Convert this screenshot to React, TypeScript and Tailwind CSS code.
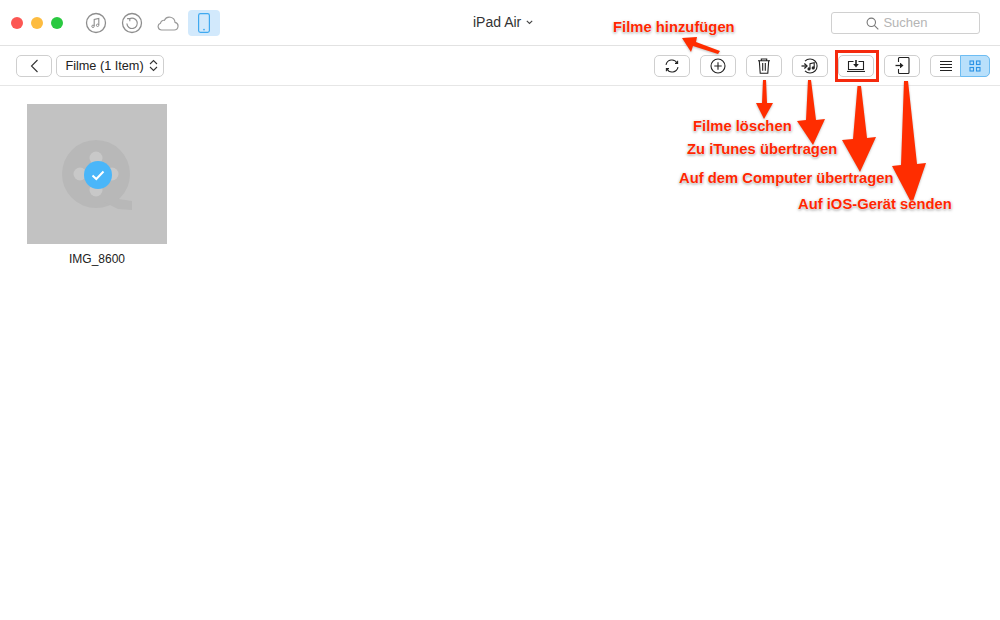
import React from 'react';

const btn = 'h-[22px] w-9 flex items-center justify-center rounded-[5px] border border-[#cfcfcf] bg-white';

const Music = () => (
  <svg width="22" height="22" viewBox="0 0 22 22" fill="none" stroke="#8e8e8e">
    <circle cx="11" cy="11" r="9.5" strokeWidth="1.3" />
    <path d="M9.200 14V7.400l4.600-1V13" strokeWidth="1.100" />
    <circle cx="8" cy="14.300" r="1.200" strokeWidth="1" />
    <circle cx="12.600" cy="13.300" r="1.200" strokeWidth="1" />
  </svg>
);

const Restore = () => (
  <svg width="22" height="22" viewBox="0 0 22 22" fill="none" stroke="#8e8e8e">
    <circle cx="11" cy="11" r="9.5" strokeWidth="1.3" />
    <path d="M8.300 6.900A5.200 5.200 0 1 1 5.900 11.500" strokeWidth="1.200" />
    <path d="M6.100 6.600h2.700v2.700" strokeWidth="1.100" />
  </svg>
);

const Cloud = () => (
  <svg width="22" height="16" viewBox="0 0 22 16" fill="none" stroke="#9a9a9a" strokeWidth="1.200">
    <path d="M4.800 15h12.400a3.900 3.900 0 0 0 .8-7.700 5.600 5.600 0 0 0-10.600-2 3.400 3.400 0 0 0-3.900 2.900A3.500 3.500 0 0 0 4.800 15z" />
  </svg>
);

const Tablet = () => (
  <svg width="14" height="20" viewBox="0 0 14 20" fill="none">
    <rect x="1.600" y="0.700" width="10.800" height="18.600" rx="1.800" stroke="#3fa9f0" strokeWidth="1.200" />
    <circle cx="7" cy="16.600" r="0.900" fill="#3fa9f0" />
  </svg>
);

const SearchIcon = () => (
  <svg width="13" height="13" viewBox="0 0 13 13" fill="none" stroke="#777" strokeWidth="1.100">
    <circle cx="5.300" cy="5.300" r="4.200" />
    <path d="M8.300 8.300l4 4" />
  </svg>
);

const Refresh = () => (
  <svg width="16" height="16" viewBox="0 0 16 16" fill="none" stroke="#222" strokeWidth="1.100">
    <path d="M2 6.800A6 6 0 0 1 13.200 5.200" />
    <path d="M14 9.200A6 6 0 0 1 2.800 10.800" />
    <path d="M11 5.400h2.600V2.800" />
    <path d="M5 10.600H2.400v2.600" />
  </svg>
);

const Plus = () => (
  <svg width="16" height="16" viewBox="0 0 16 16" fill="none" stroke="#222" strokeWidth="1.100">
    <circle cx="8" cy="8" r="7" />
    <path d="M8 4.300v7.400M4.300 8h7.400" />
  </svg>
);

const Trash = () => (
  <svg width="14" height="16" viewBox="0 0 14 16" fill="none" stroke="#222" strokeWidth="1.100">
    <path d="M1 2.800h12M4.300 2.800V1h5.400v1.800" />
    <path d="M2.300 2.800l.9 12.400h7.600l.9-12.400" />
    <path d="M5.700 5v7.800M8.300 5v7.800" />
  </svg>
);

const ToItunes = () => (
  <svg width="18" height="16" viewBox="0 0 18 16" fill="none" stroke="#222" strokeWidth="1.100">
    <path d="M4 3.200A7 7 0 1 1 4 12.800" />
    <path d="M0.500 8h5" strokeWidth="1.300" />
    <path d="M3.400 5.600L6 8 3.400 10.400" strokeWidth="1.300" />
    <path d="M9 10.800V5.600l4.200-.9v5" />
    <circle cx="8" cy="10.900" r="1" fill="#222" />
    <circle cx="12.200" cy="9.900" r="1" fill="#222" />
  </svg>
);

const ToComputer = () => (
  <svg width="18" height="12" viewBox="0 0 18 12" fill="none" stroke="#222" strokeWidth="1.100">
    <path d="M6.500 1.500H1.500v8h15v-8h-5" />
    <path d="M0 11.500h18" strokeWidth="1.200" />
    <path d="M9 0v4" strokeWidth="1.600" />
    <path d="M6.200 4h5.600L9 7.400z" fill="#222" stroke="none" />
  </svg>
);

const ToDevice = () => (
  <svg width="15" height="17" viewBox="0 0 15 17" fill="none" stroke="#222" strokeWidth="1.100">
    <path d="M3.500 5V1.500a1 1 0 0 1 1-1h8.500a1 1 0 0 1 1 1v14a1 1 0 0 1-1 1H4.500a1 1 0 0 1-1-1V12" />
    <path d="M0.500 8.500h6" strokeWidth="1.300" />
    <path d="M5 5.900h.5l3 2.600-3 2.600H5z" fill="#222" stroke="none" />
  </svg>
);

const Reel = () => (
  <svg width="72" height="72" viewBox="0 0 72 72">
    <circle cx="34" cy="34" r="34" fill="#b8b8b8" />
    <path d="M50 58l20 3v9l-14-1-14-7z" fill="#b8b8b8" />
    <circle cx="34" cy="18" r="6.500" fill="#c8c8c8" />
    <circle cx="34" cy="50" r="6.500" fill="#c8c8c8" />
    <circle cx="18" cy="34" r="6.500" fill="#c8c8c8" />
    <circle cx="50" cy="34" r="6.500" fill="#c8c8c8" />
  </svg>
);

const labels = [
  { text: 'Filme hinzufügen', cls: 'left-[613px] top-[19px]' },
  { text: 'Filme löschen', cls: 'left-[693px] top-[118px]' },
  { text: 'Zu iTunes übertragen', cls: 'left-[687px] top-[141px]' },
  { text: 'Auf dem Computer übertragen', cls: 'left-[679px] top-[170px]' },
  { text: 'Auf iOS-Gerät senden', cls: 'left-[798px] top-[196px]' },
];

export default function App() {
  return (
    <div className="relative h-[620px] w-[1000px] overflow-hidden bg-white font-['Liberation_Sans',Arial,sans-serif] text-[#222]">
      <div className="relative flex h-[46px] items-center border-b border-[#e2e2e2] pl-[11px] pr-5">
        <div className="flex gap-2">
          <span className="h-3 w-3 rounded-full bg-[#fc5753]" />
          <span className="h-3 w-3 rounded-full bg-[#fdbc40]" />
          <span className="h-3 w-3 rounded-full bg-[#2ac940]" />
        </div>
        <div className="ml-[22px] flex items-center gap-[14px]">
          <Music />
          <Restore />
          <Cloud />
        </div>
        <div className="ml-[9px] flex h-[26px] w-8 items-center justify-center rounded-[4px] bg-[#d2e9fc]">
          <Tablet />
        </div>
        <div className="ml-[253px] flex items-center gap-[5px] text-[14px] text-[#333]">
          iPad Air
          <svg width="7" height="5" viewBox="0 0 7 5" fill="none" stroke="#444" strokeWidth="1.100">
            <path d="M0.800 0.800L3.500 3.500 6.200 0.800" />
          </svg>
        </div>
        <div className="ml-auto flex h-[22px] w-[149px] items-center justify-center gap-[4px] rounded-[3px] border border-[#d0d0d0] pr-[17px] pt-px text-[13px] text-[#b5b5b5]">
          <SearchIcon />
          Suchen
        </div>
      </div>

      <div className="flex h-[40px] items-center border-b border-[#e6e6e6] pl-4 pr-[10px]">
        <div className={btn}>
          <svg width="9" height="14" viewBox="0 0 9 14" fill="none" stroke="#333" strokeWidth="1.100">
            <path d="M7.500 1L1.500 7l6 6" />
          </svg>
        </div>
        <div className="ml-1 flex h-[22px] w-[108px] items-center justify-center gap-[5px] rounded-[5px] border border-[#cfcfcf] pl-[3px] text-[12.700px] text-[#222]">
          <span className="mt-[2px]">Filme (1 Item)</span>
          <svg width="9" height="13" viewBox="0 0 9 13" fill="none" stroke="#333" strokeWidth="1.100">
            <path d="M1 5l3.500-3.500L8 5M1 8l3.500 3.500L8 8" />
          </svg>
        </div>
        <div className="ml-auto flex items-center gap-[10px]">
          <div className={btn}><Refresh /></div>
          <div className={btn}><Plus /></div>
          <div className={btn}><Trash /></div>
          <div className={btn}><ToItunes /></div>
          <div className={btn}><ToComputer /></div>
          <div className={btn}><ToDevice /></div>
          <div className="flex h-[22px] w-[60px] rounded-[5px] border border-[#cfcfcf]">
            <div className="flex w-[29px] items-center justify-center">
              <svg width="14" height="12" viewBox="0 0 14 12" stroke="#222" strokeWidth="1.100">
                <path d="M1 1.500h12M1 4.500h12M1 7.500h12M1 10.500h12" />
              </svg>
            </div>
            <div className="-my-px -mr-px flex flex-1 items-center justify-center rounded-r-[5px] border border-[#6dbdf3] bg-[#b9e0fb]">
              <svg width="12" height="12" viewBox="0 0 12 12" fill="none" stroke="#2a93e6" strokeWidth="1.100">
                <rect x="1" y="1" width="3.500" height="3.500" />
                <rect x="7.500" y="1" width="3.500" height="3.500" />
                <rect x="1" y="7.500" width="3.500" height="3.500" />
                <rect x="7.500" y="7.500" width="3.500" height="3.500" />
              </svg>
            </div>
          </div>
        </div>
      </div>

      <div className="ml-[27px] mt-[18px] flex w-[140px] flex-col items-center">
        <div className="relative flex h-[140px] w-[140px] items-center justify-center bg-[#c2c2c2]">
          <div className="ml-[2px] mt-[4px]"><Reel /></div>
          <div className="absolute left-[57px] top-[57px] flex h-7 w-7 items-center justify-center rounded-full bg-[#4ab6f9]">
            <svg width="14" height="11" viewBox="0 0 14 11" fill="none" stroke="#fff" strokeWidth="2">
              <path d="M1.500 5.500L5.300 9 12.500 1.500" />
            </svg>
          </div>
        </div>
        <div className="mt-2 text-[12px] leading-[14px] text-[#222]">IMG_8600</div>
      </div>

      <svg className="absolute left-0 top-0 drop-shadow-[0_1px_1px_rgba(0,0,0,0.25)]" width="1000" height="620" viewBox="0 0 1000 620" fill="#ff2d00">
        <path d="M682 38l15-1-1 5 24 9-2 3-25-8-2 6z" />
        <path d="M763 80h3l1 23h6l-9 16-8-16h6z" />
        <path d="M808 80h3l5 40 9-1-12 26-16-24 9-1z" />
        <path d="M857.500 86h3.500l6 52 9-1-16 35-18-32 11-1z" />
        <path d="M904 81h4l9 83 9-1-14 41-20-38 9-1z" />
      </svg>
      <div className="absolute left-[835px] top-[50px] h-[32px] w-[44px] border-[3px] border-[#f52a0e]" />

      {labels.map((l) => (
        <div
          key={l.text}
          className={`absolute whitespace-nowrap text-[14.800px] font-bold leading-4 text-[#ff2600] [text-shadow:0_0_2px_#fff,0_0_2px_#fff,0_1px_3px_rgba(0,0,0,0.55)] ${l.cls}`}
        >
          {l.text}
        </div>
      ))}
    </div>
  );
}
